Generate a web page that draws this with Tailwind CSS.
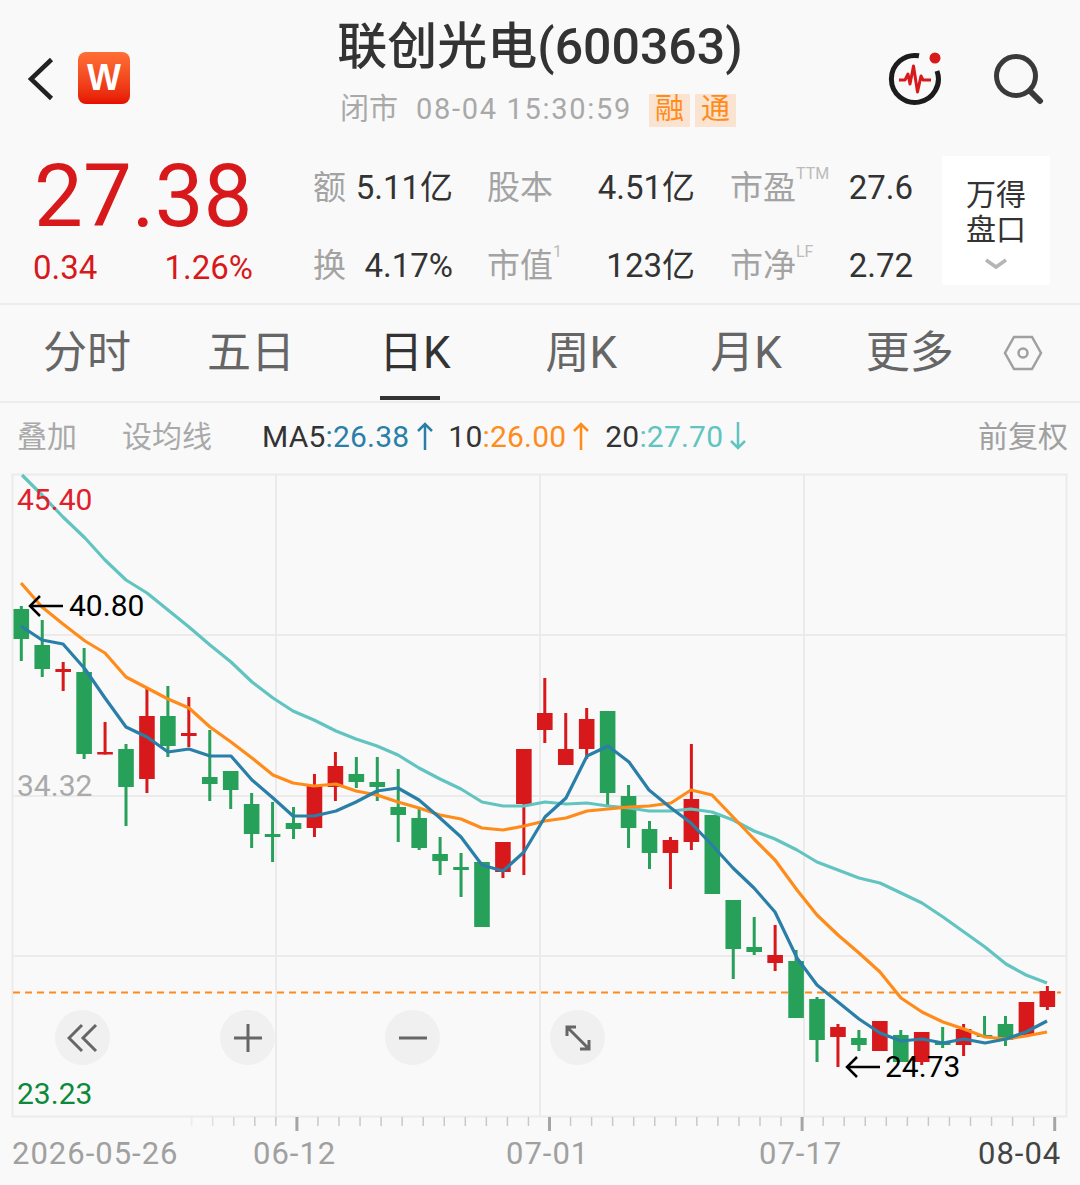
<!DOCTYPE html>
<html lang="zh-CN">
<head>
  <meta charset="UTF-8">
  <title>联创光电(600363)</title>
  <script src="https://cdn.jsdelivr.net/npm/@tailwindcss/browser@4"></script>
</head>
<body class="bg-[#f9f9f9]">
<div class="w-[1080px] h-[1185px] overflow-hidden bg-[#f9f9f9] text-[#333] font-['Roboto','Noto_Sans_CJK_SC',sans-serif]">

  <!-- header -->
  <div class="grid grid-cols-[1fr_auto_1fr] h-[148px]">
    <div class="flex items-start pl-[28px] pt-[52px] gap-[24px]">
      <svg class="mt-[5px]" width="26" height="44" viewBox="0 0 26 44"><path d="M23.5 2.5 3 22l20.500 19.500" fill="none" stroke="#222" stroke-width="4.500"/></svg>
      <div class="w-[52px] h-[52px] rounded-[8px] bg-gradient-to-b from-[#ff6e35] to-[#e50d00] flex items-center justify-center text-white text-[36px] font-bold font-['Liberation_Sans',sans-serif] leading-none">W</div>
    </div>
    <div class="flex flex-col items-center pt-[16px]">
      <div class="text-[50px] leading-[62px] font-medium">联创光电(600363)</div>
      <div class="flex items-center h-[32px] mt-[16px] mr-[4px] text-[29px] text-[#a9a9a9]">
        <span>闭市</span>
        <span class="ml-[18px] tracking-[1.7px]">08-04 15:30:59</span>
        <span class="ml-[17px] w-[41px] h-[33px] bg-[#fae3d1] text-[#ff8c1a] flex items-center justify-center">融</span>
        <span class="ml-[5px] w-[41px] h-[33px] bg-[#fae3d1] text-[#ff8c1a] flex items-center justify-center">通</span>
      </div>
    </div>
    <div class="flex justify-end items-start pt-[52px] pr-[36px] gap-[51px]">
      <svg width="54" height="54" viewBox="0 0 54 54">
        <path d="M32 3.800A23.500 23.500 0 1 0 50 19" fill="none" stroke="#1c1c1c" stroke-width="5"/>
        <path d="M12 28h6l3-6 2 10 3.500-18 4 26 3.500-16 2 4h8" fill="none" stroke="#d7191c" stroke-width="3" stroke-linejoin="round"/>
        <circle cx="48" cy="6" r="5.500" fill="#d7191c"/>
      </svg>
      <svg width="52" height="52" viewBox="0 0 52 52" class="mt-[1px]">
        <circle cx="24" cy="23" r="19.500" fill="none" stroke="#3a3a3a" stroke-width="5"/>
        <path d="M38 38l10 10" fill="none" stroke="#3a3a3a" stroke-width="6" stroke-linecap="round"/>
      </svg>
    </div>
  </div>

  <!-- quote -->
  <div class="flex h-[157px] border-b-2 border-[#ececec]">
    <div class="w-[313px] pl-[33px] shrink-0">
      <div class="text-[87px] leading-[92px] mt-[2px] text-[#d7191c] ml-[1px]">27.38</div>
      <div class="flex justify-between w-[220px] text-[33px] leading-[40px] mt-[6px] text-[#d7191c]">
        <span>0.34</span><span>1.26%</span>
      </div>
    </div>
    <div class="w-[600px] shrink-0 text-[33px] leading-[78px] pt-[1px]">
      <div class="flex h-[78px]">
        <div class="w-[140px] flex justify-between"><span class="text-[#a3a3a3]">额</span><span>5.11亿</span></div>
        <div class="w-[208px] ml-[34px] flex justify-between"><span class="text-[#a3a3a3]">股本</span><span>4.51亿</span></div>
        <div class="w-[183px] ml-[35px] flex justify-between"><span class="text-[#a3a3a3]">市盈<sup class="text-[16px] align-[12px] leading-none text-[#bbb]">TTM</sup></span><span>27.6</span></div>
      </div>
      <div class="flex h-[78px]">
        <div class="w-[140px] flex justify-between"><span class="text-[#a3a3a3]">换</span><span>4.17%</span></div>
        <div class="w-[208px] ml-[34px] flex justify-between"><span class="text-[#a3a3a3]">市值<sup class="text-[16px] align-[12px] leading-none text-[#bbb]">1</sup></span><span>123亿</span></div>
        <div class="w-[183px] ml-[35px] flex justify-between"><span class="text-[#a3a3a3]">市净<sup class="text-[16px] align-[12px] leading-none text-[#bbb]">LF</sup></span><span>2.72</span></div>
      </div>
    </div>
    <div class="ml-[29px] mt-[8px] w-[108px] h-[129px] bg-white rounded-[3px] flex flex-col items-center pt-[21px] text-[30px] leading-[35px]">
      <span>万得</span><span>盘口</span>
      <svg class="mt-[11px]" width="24" height="12" viewBox="0 0 24 12"><path d="M2 2l10 7 10-7" fill="none" stroke="#b5b5b5" stroke-width="3.500"/></svg>
    </div>
  </div>

  <!-- period tabs -->
  <div class="flex items-center h-[98px] border-b-2 border-[#ececec] text-[44px] text-[#666] pl-[43px]">
    <span>分时</span>
    <span class="ml-[76px]">五日</span>
    <span class="ml-[84px] relative text-[#333]">日K<span class="absolute left-[1px] bottom-[-14px] w-[60px] h-[4px] bg-[#333]"></span></span>
    <span class="ml-[95px]">周K</span>
    <span class="ml-[93px]">月K</span>
    <span class="ml-[84px]">更多</span>
    <svg class="ml-[49px]" width="40" height="36" viewBox="0 0 40 36"><path d="M11 2h18l9 16-9 16H11L2 18z" fill="none" stroke="#a0a0a0" stroke-width="2.500"/><circle cx="20" cy="18" r="4.500" fill="none" stroke="#a0a0a0" stroke-width="2.500"/></svg>
  </div>

  <!-- moving averages -->
  <div class="flex items-center h-[70px] pb-[4px] text-[30px] pl-[17px]">
    <span class="text-[#a9a9a9]">叠加</span>
    <span class="ml-[45px] text-[#a9a9a9]">设均线</span>
    <span class="ml-[50px] tracking-[0.2px]">MA5</span><span class="text-[#2a7fa8] tracking-[0.2px]">:26.38</span>
    <svg class="ml-[6px]" width="20" height="30" viewBox="0 0 20 30"><path d="M10 29V3M3 10l7-7 7 7" fill="none" stroke="#2a7fa8" stroke-width="2.500"/></svg>
    <span class="ml-[13px] tracking-[0.2px]">10</span><span class="text-[#ff8c1a] tracking-[0.2px]">:26.00</span>
    <svg class="ml-[5px]" width="20" height="30" viewBox="0 0 20 30"><path d="M10 29V3M3 10l7-7 7 7" fill="none" stroke="#ff8c1a" stroke-width="2.500"/></svg>
    <span class="ml-[14px] tracking-[0.2px]">20</span><span class="text-[#62c4c0] tracking-[0.2px]">:27.70</span>
    <svg class="ml-[5px]" width="20" height="30" viewBox="0 0 20 30"><path d="M10 1v26M3 20l7 7 7-7" fill="none" stroke="#62c4c0" stroke-width="2.500"/></svg>
    <span class="ml-auto pr-[12px] text-[#a0a0a0]">前复权</span>
  </div>

  <!-- k-line chart, top edge sits at y=473 -->
  <div class="relative h-[712px]">
    <svg id="chart" class="block" width="1080" height="712" viewBox="0 473 1080 712"></svg>

    <span class="absolute left-[17px] top-[9px] text-[30px] leading-[36px] text-[#e0202a]">45.40</span>
    <span class="absolute left-[17px] top-[295px] text-[30px] leading-[36px] text-[#aaa]">34.32</span>
    <span class="absolute left-[17px] top-[603px] text-[30px] leading-[36px] text-[#0a8a3a]">23.23</span>

    <div class="absolute left-[28px] top-[115px] flex items-center gap-[6px] text-[30px] leading-[36px] text-black">
      <svg width="35" height="22" viewBox="0 0 35 22"><path d="M35 11H2M12 1 2 11l10 10" fill="none" stroke="#000" stroke-width="2.500"/></svg>
      <span>40.80</span>
    </div>
    <div class="absolute left-[845px] top-[576px] flex items-center gap-[5px] text-[30px] leading-[36px] text-black">
      <svg width="35" height="22" viewBox="0 0 35 22"><path d="M35 11H2M12 1 2 11l10 10" fill="none" stroke="#000" stroke-width="2.500"/></svg>
      <span>24.73</span>
    </div>

    <div class="absolute left-[55px] top-[537px] flex gap-[110px]">
      <div class="w-[55px] h-[55px] rounded-full bg-[#f0f0f0] flex items-center justify-center">
        <svg width="32" height="30" viewBox="0 0 32 30"><path d="M15 2 2 15l13 13M29 2 16 15l13 13" fill="none" stroke="#666" stroke-width="3"/></svg>
      </div>
      <div class="w-[55px] h-[55px] rounded-full bg-[#f0f0f0] flex items-center justify-center">
        <svg width="30" height="30" viewBox="0 0 30 30"><path d="M1 15h28M15 1v28" fill="none" stroke="#666" stroke-width="3"/></svg>
      </div>
      <div class="w-[55px] h-[55px] rounded-full bg-[#f0f0f0] flex items-center justify-center">
        <svg width="30" height="30" viewBox="0 0 30 30"><path d="M1 15h28" fill="none" stroke="#666" stroke-width="3"/></svg>
      </div>
      <div class="w-[55px] h-[55px] rounded-full bg-[#f0f0f0] flex items-center justify-center">
        <svg width="30" height="30" viewBox="0 0 30 30"><path d="M4 4l22 22M4 13V4h9M26 17v9h-9" fill="none" stroke="#666" stroke-width="3"/></svg>
      </div>
    </div>

    <span class="absolute left-[12px] top-[663px] text-[31px] leading-[36px] tracking-[1px] text-[#a0a0a0]">2026-05-26</span>
    <span class="absolute left-[253px] top-[663px] text-[31px] leading-[36px] tracking-[1px] text-[#a0a0a0]">06-12</span>
    <span class="absolute left-[506px] top-[663px] text-[31px] leading-[36px] tracking-[1px] text-[#a0a0a0]">07-01</span>
    <span class="absolute left-[759px] top-[663px] text-[31px] leading-[36px] tracking-[1px] text-[#a0a0a0]">07-17</span>
    <span class="absolute left-[978px] top-[663px] text-[31px] leading-[36px] tracking-[1px] text-[#444]">08-04</span>
  </div>
</div>

<script>
  const RED = '#d7191c', GREEN = '#27a05a';
  // [colour, high, body top, body bottom, low] in pixels
  const candles = [
    ['g',606,609,639,661],['g',620,645,669,677],['r',662,669,672,691],['g',648,672,754,759],['r',722,752,754.500,754.500],
    ['g',744,749,787,826],['r',688,716,779,793],['g',686,716,746,757],['r',697,733,736,747],['g',730,777,784,801],
    ['g',771,771,790,809],['g',793,804,834,848],['g',802,834,837,862],['g',807,823,829,839],['r',774,786,828,837],
    ['r',752,766,787,801],['g',757,774,782,788],['g',757,782,787,801],['g',769,807,815,842],['g',809,818,848,850],
    ['g',837,854,861,875],['g',853,867,870,897],['g',862,862,927,927],['r',842,842,872,878],['r',749,749,804,875],
    ['r',678,713,730,743],['r',713,749,765,765],['r',708,719,749,759],['g',711,711,793,807],['g',785,796,828,848],
    ['g',821,829,853,869],['r',837,840,853,889],['r',744,799,842,850],['g',815,815,894,894],['g',900,900,949,979],
    ['g',917,947,952,955],['r',925,955,963,971],['g',950,961,1018,1018],['g',997,999,1040,1062],['r',1024,1027,1037,1067],
    ['g',1030,1038,1045,1051],['r',1021,1021,1051,1051],['g',1030,1035,1062,1062],['r',1032,1032,1062,1065],['g',1027,1043,1045,1048],
    ['r',1024,1029,1045,1056],['g',1016,1035,1037,1037],['g',1016,1024,1040,1046],['r',1002,1002,1035,1035],['r',986,991,1007,1010]
  ];
  const ma5 = '21,626 42,640 63,644 85,669 105,698 126,727 147,737 168,752 189,749 210,756 231,756 252,780 273,798 293,816 314,816 336,811 356,802 377,791 398,788 419,800 440,818 461,837 482,865 503,871 524,852 545,817 566,798 587,756 608,746 629,762 649,790 671,808 691,823 712,845 733,868 754,888 775,912 797,958 817,985 838,1002 859,1019 880,1033 901,1041 922,1039 943,1043 964,1039 985,1043 1006,1039 1026,1032 1047,1021';
  const ma10 = '21,583 42,607 63,624 85,641 105,653 126,677 147,688 168,699 189,708 210,727 231,742 252,758 273,775 293,783 314,786 336,784 356,791 377,795 398,802 419,808 440,815 461,819 482,828 503,830 524,826 545,821 566,818 587,811 608,809 629,807 649,806 671,803 691,790 712,795 733,817 754,839 775,860 797,890 817,915 838,935 859,953 880,972 901,998 922,1012 943,1022 964,1029 985,1037 1006,1039 1026,1036 1047,1032';
  const ma20 = '22,475 42,495 63,517 85,538 105,560 126,580 147,593 168,610 189,627 210,645 231,662 252,682 273,698 293,711 314,720 336,731 356,739 377,746 398,755 419,768 440,779 461,789 482,802 503,806 524,806 545,802 566,804 587,803 608,806 629,808 649,811 671,811 691,809 712,812 733,820 754,831 775,839 797,850 817,862 838,870 859,878 880,883 901,893 922,903 943,917 964,932 985,947 1006,964 1026,975 1047,983';

  let s = '';
  // grid
  const grid = '#ebebeb';
  s += `<rect x="12.500" y="474.500" width="1054" height="642" fill="none" stroke="${grid}" stroke-width="2"/>`;
  [635, 796, 956].forEach(y => s += `<line x1="13" x2="1066" y1="${y}" y2="${y}" stroke="${grid}" stroke-width="2"/>`);
  [276, 540, 804].forEach(x => s += `<line x1="${x}" x2="${x}" y1="475" y2="1116" stroke="${grid}" stroke-width="2"/>`);
  // last close
  s += `<line x1="13" x2="1061" y1="992.500" y2="992.500" stroke="#ff8c1a" stroke-width="2" stroke-dasharray="7 5"/>`;
  // axis ticks
  for (let k = 0; k <= 41; k++) {
    const x = 1054.700 - 21.050 * k, major = k % 12 === 0;
    const o = k > 38 ? (42 - k) * 0.25 : 1;
    s += `<line x1="${x}" x2="${x}" y1="1117" y2="${major ? 1131 : 1126}" stroke="${major ? '#a5a5a5' : '#c8c8c8'}" stroke-width="${major ? 3 : 1.500}" opacity="${o}"/>`;
  }
  // candles
  candles.forEach((c, i) => {
    const x = 21.300 + 20.940 * i, col = c[0] === 'r' ? RED : GREEN;
    s += `<rect x="${x - 1.500}" y="${c[1]}" width="3" height="${c[4] - c[1]}" fill="${col}"/>`;
    s += `<rect x="${x - 7.800}" y="${c[2]}" width="15.600" height="${Math.max(c[3] - c[2], 2)}" fill="${col}"/>`;
  });
  // moving averages
  [[ma20, '#62c4c0'], [ma10, '#ff8c1a'], [ma5, '#2a7fa8']].forEach(m => {
    s += `<polyline points="${m[0]}" fill="none" stroke="${m[1]}" stroke-width="3.200" stroke-linejoin="round"/>`;
  });
  document.getElementById('chart').innerHTML = s;
</script>
</body>
</html>
